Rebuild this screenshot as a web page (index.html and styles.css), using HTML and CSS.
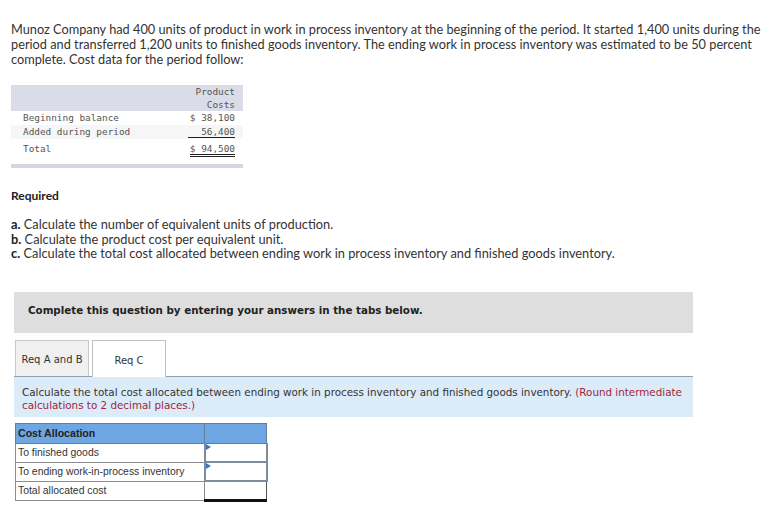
FILE: index.html
```html
<!DOCTYPE html>
<html>
<head>
<meta charset="utf-8">
<link rel="stylesheet" href="styles.css">
</head>
<body>
<div class="page">
  <p class="intro">Munoz Company had 400 units of product in work in process inventory at the beginning of the period. It started 1,400 units during the period and transferred 1,200 units to finished goods inventory. The ending work in process inventory was estimated to be 50 percent complete. Cost data for the period follow:</p>

  <div class="datawrap">
    <table class="data">
      <thead>
        <tr><th class="lbl"></th><th class="num">Product<br>Costs</th></tr>
      </thead>
      <tbody>
        <tr class="r1"><td class="lbl">Beginning balance</td><td class="num">$ 38,100</td></tr>
        <tr class="alt"><td class="lbl">Added during period</td><td class="num"><span class="single">56,400</span></td></tr>
        <tr class="r3"><td class="lbl">Total</td><td class="num"><span class="double">$ 94,500</span></td></tr>
      </tbody>
    </table>
  </div>

  <h3 class="req">Required</h3>
  <ul class="tasks">
    <li><b>a.</b> Calculate the number of equivalent units of production.</li>
    <li><b>b.</b> Calculate the product cost per equivalent unit.</li>
    <li><b>c.</b> Calculate the total cost allocated between ending work in process inventory and finished goods inventory.</li>
  </ul>

  <div class="panel">
    <div class="notice">Complete this question by entering your answers in the tabs below.</div>
    <div class="tabs">
      <div class="tab">Req A and B</div>
      <div class="tab active">Req C</div>
    </div>
    <div class="instr">Calculate the total cost allocated between ending work in process inventory and finished goods inventory. <span class="red">(Round intermediate calculations to 2 decimal places.)</span></div>

    <table class="alloc">
      <tr class="head"><th>Cost Allocation</th><th></th></tr>
      <tr><td>To finished goods</td><td class="inp"><span class="tri"></span></td></tr>
      <tr><td>To ending work-in-process inventory</td><td class="inp"><span class="tri"></span></td></tr>
      <tr class="tot"><td>Total allocated cost</td><td class="inp total"></td></tr>
    </table>

    <div class="buttons">
      <div class="btn prev"></div>
      <div class="btn next"></div>
    </div>
  </div>
</div>
</body>
</html>
```

FILE: styles.css
```css
html, body {
  margin: 0;
  padding: 0;
  background: #fff;
}
.page {
  padding: 22px 6px 0 11px;
  font-family: "Lato", "Open Sans", sans-serif;
  color: #333;
}
.intro {
  margin: 0;
  font-size: 12.75px;
  line-height: 15px;
  color: #333;
}
.datawrap {
  margin-top: 18px;
  width: 232px;
  padding-bottom: 5px;
  border-bottom: 4px solid #d4d7e0;
}
.data {
  border-collapse: collapse;
  width: 232px;
  font-family: "DejaVu Sans Mono", monospace;
  font-size: 9.4px;
  color: #555;
}
.data thead th {
  background: #dadde8;
  font-weight: normal;
  height: 26px;
  padding: 0 8px 0 0;
  line-height: 13px;
  vertical-align: bottom;
}
.data .num {
  text-align: right;
  padding-right: 8px;
}
.data .lbl {
  text-align: left;
  padding-left: 12px;
}
.data tbody td {
  padding-top: 0;
  padding-bottom: 0;
  line-height: 12px;
}
.data tbody tr.r1 td { height: 14px; }
.data tbody tr.alt td { height: 14px; background: #f6f6f6; }
.data tbody tr.r3 td { height: 20px; vertical-align: top; padding-top: 4px; box-sizing: border-box; }
.data .single {
  display: inline-block;
  border-bottom: 1px solid #222;
  padding-left: 13px;
  line-height: 11px;
}
.data .double {
  display: inline-block;
  border-bottom: 3px double #222;
  line-height: 11px;
}
.req {
  margin: 20px 0 0;
  font-size: 12px;
  font-weight: 700;
  color: #222;
}
.tasks {
  list-style: none;
  margin: 14px 0 0;
  padding: 0;
  font-size: 12.8px;
  line-height: 14.5px;
  color: #333;
}
.tasks b { color: #222; }
.panel {
  margin: 31px 0 0 3px;
  width: 679px;
  font-family: "DejaVu Sans", Verdana, sans-serif;
}
.notice {
  background: #dedede;
  height: 41px;
  box-sizing: border-box;
  padding: 12px 0 0 14px;
  font-size: 10.3px;
  font-weight: bold;
  color: #222;
}
.tabs {
  display: flex;
  margin-top: 7px;
  padding-left: 1px;
  border-bottom: 1px solid #8ea2b3;
  gap: 3px;
}
.tab {
  height: 36px;
  box-sizing: border-box;
  width: 74px;
  padding-top: 3px;
  border: 1px solid #c8c8c8;
  border-bottom: none;
  background: #f0f0f0;
  font-family: "DejaVu Sans", Verdana, sans-serif;
  font-size: 10px;
  color: #333;
  display: flex;
  align-items: center;
  justify-content: center;
  margin-bottom: -1px;
}
.tab.active {
  background: #fff;
  height: 37px;
  border-color: #c0c0c0;
}
.instr {
  background: #dcebf8;
  padding: 9px 3px 5px 8px;
  font-family: "DejaVu Sans", Verdana, sans-serif;
  font-size: 10.35px;
  line-height: 13px;
  color: #333;
}
.red { color: #a0243c; }
.alloc {
  margin: 6px 0 0 1px;
  border-collapse: collapse;
  font-family: "Liberation Sans", Arial, sans-serif;
  font-size: 10.4px;
  line-height: 12px;
  color: #333;
}
.alloc th, .alloc td {
  border: 1px solid #8c8c8c;
  height: 18px;
  padding: 0 0 0 2px;
  text-align: left;
  box-sizing: border-box;
}
.alloc th:first-child, .alloc td:first-child { width: 189px; }
.alloc th:last-child, .alloc td:last-child { width: 62px; }
.alloc .head th {
  background: #6ea6e4;
  font-weight: bold;
  font-size: 10.6px;
  color: #222;
  height: 20px;
  border-color: #5f7f9e;
}
.alloc td.inp {
  position: relative;
  border: 2px solid #7d8d9d;
  border-top-width: 1px;
  background: #fff;
  padding: 0;
  height: 19px;
}
.alloc .tri {
  position: absolute;
  left: 0;
  top: 0;
  width: 0;
  height: 0;
  border-top: 3px solid transparent;
  border-bottom: 3px solid transparent;
  border-left: 5px solid #3b78c4;
}
.alloc td.inp.total {
  border: 1px solid #8c8c8c;
  border-top: 1px solid #111;
  border-bottom: 3px solid #111;
  border-right: 1px solid #555;
}
.buttons {
  display: flex;
  gap: 17px;
  margin: 7px 0 0 193px;
}
.btn {
  width: 131px;
  height: 0;
  border-radius: 3px 3px 0 0;
}
.btn.prev { border-top: 2px solid #5a7893; }
.btn.next { border-top: 2px solid #d6d6d6; }
```
